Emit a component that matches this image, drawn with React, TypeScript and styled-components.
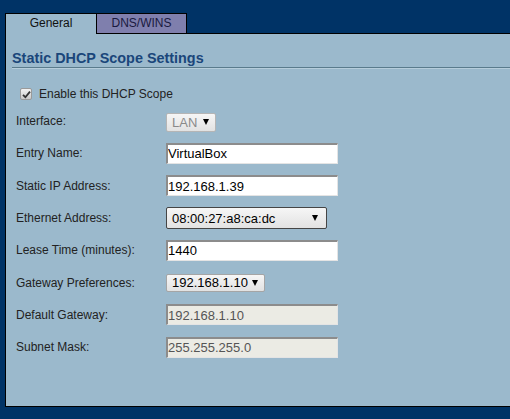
import React from "react";
import styled, { createGlobalStyle } from "styled-components";

const GlobalStyle = createGlobalStyle`
  html, body {
    margin: 0;
    padding: 0;
    background: #003366;
    overflow: hidden;
  }
  body {
    font-family: "Liberation Sans", Arial, sans-serif;
  }
`;

const Page = styled.div`
  width: 510px;
  height: 419px;
  padding: 13px 0 0 5px;
  box-sizing: border-box;
  display: flex;
  flex-direction: column;
`;

const TabBar = styled.div`
  display: flex;
  align-items: flex-end;
  height: 20px;
  position: relative;
  z-index: 1;
`;

const Tab = styled.div<{ $active?: boolean }>`
  box-sizing: border-box;
  height: 21px;
  width: ${(p) => (p.$active ? "92px" : "91px")};
  margin-left: ${(p) => (p.$active ? "0" : "-1px")};
  margin-bottom: -1px;
  border: 1px solid #000;
  border-bottom: ${(p) => (p.$active ? "none" : "1px solid #000")};
  background: ${(p) => (p.$active ? "#9bb9cc" : "#7f7fad")};
  color: ${(p) => (p.$active ? "#111" : "#1a1a40")};
  font-size: 12px;
  line-height: 16px;
  text-align: center;
  padding-top: 1px;
`;

const Panel = styled.div`
  box-sizing: border-box;
  height: 374px;
  width: 520px;
  border: 1px solid #000;
  background: #9bb9cc;
  padding: 16px 0 0 6px;
`;

const Heading = styled.h2`
  margin: 0;
  font-size: 14.4px;
  line-height: 17px;
  font-weight: bold;
  color: #1a467a;
  border-bottom: 1px solid #5a7b8c;
  box-shadow: 0 1px 0 #b6cddb;
`;

const CheckRow = styled.label`
  display: flex;
  align-items: center;
  height: 22px;
  margin: 15px 0 0 8px;
  font-size: 12px;
  color: #222;
  gap: 7px;
`;

const CheckBox = styled.span`
  box-sizing: border-box;
  width: 12px;
  height: 12px;
  border: 1px solid #9a9a9a;
  border-radius: 2px;
  background: linear-gradient(#f2f2f2, #c9c9c9);
  display: flex;
  align-items: center;
  justify-content: center;
`;

const Form = styled.div`
  display: grid;
  grid-template-columns: 150px 1fr;
  grid-auto-rows: 32.3px;
  align-items: center;
  margin-left: 4px;
`;

const Label = styled.div`
  font-size: 12px;
  color: #222;
`;

const TextInput = styled.input<{ $disabled?: boolean }>`
  box-sizing: border-box;
  width: 172px;
  height: 21px;
  margin: 0;
  padding: 0;
  border-style: solid;
  border-width: 2px 1px 1px 2px;
  border-color: #8c8c8c #e4e4e4 #e4e4e4 #8c8c8c;
  background: ${(p) => (p.$disabled ? "#ebebe4" : "#fff")};
  color: ${(p) => (p.$disabled ? "#555" : "#000")};
  font-family: "Liberation Sans", Arial, sans-serif;
  font-size: 13px;
  outline: none;
`;

const SelectBox = styled.div<{ $w: number; $h: number; $focused?: boolean; $disabled?: boolean }>`
  box-sizing: border-box;
  width: ${(p) => p.$w}px;
  height: ${(p) => p.$h}px;
  border: 1px solid ${(p) => (p.$focused ? "#454545" : p.$disabled ? "#b5b5b5" : "#a5a5a5")};
  border-radius: 2px;
  background: linear-gradient(#f6f6f6, #e2e2e2);
  display: flex;
  align-items: center;
  justify-content: space-between;
  padding: 0 ${(p) => (p.$focused ? 8 : 6)}px 0 5px;
  font-size: 13px;
  color: ${(p) => (p.$disabled ? "#8a8a8a" : "#000")};
  margin-top: ${(p) => (p.$disabled ? "2px" : "0")};
`;

const Arrow = styled.span`
  width: 0;
  height: 0;
  border-left: 3px solid transparent;
  border-right: 3px solid transparent;
  border-top: 6px solid #000;
`;

type Row =
  | { label: string; kind: "input"; value: string; disabled?: boolean }
  | { label: string; kind: "select"; value: string; w: number; h: number; focused?: boolean; disabled?: boolean };

const rows: Row[] = [
  { label: "Interface:", kind: "select", value: "LAN", w: 50, h: 19, disabled: true },
  { label: "Entry Name:", kind: "input", value: "VirtualBox" },
  { label: "Static IP Address:", kind: "input", value: "192.168.1.39" },
  { label: "Ethernet Address:", kind: "select", value: "08:00:27:a8:ca:dc", w: 161, h: 22, focused: true },
  { label: "Lease Time (minutes):", kind: "input", value: "1440" },
  { label: "Gateway Preferences:", kind: "select", value: "192.168.1.10", w: 99, h: 18 },
  { label: "Default Gateway:", kind: "input", value: "192.168.1.10", disabled: true },
  { label: "Subnet Mask:", kind: "input", value: "255.255.255.0", disabled: true },
];

export default function App() {
  return (
    <>
      <GlobalStyle />
      <Page>
        <TabBar>
          <Tab $active>General</Tab>
          <Tab>DNS/WINS</Tab>
        </TabBar>
        <Panel>
          <Heading>Static DHCP Scope Settings</Heading>
          <CheckRow>
            <CheckBox>
              <svg width="9" height="9" viewBox="0 0 9 9">
                <path d="M1 4.8 L3.4 7.2 L8 1.6" fill="none" stroke="#333" strokeWidth="1.8" />
              </svg>
            </CheckBox>
            Enable this DHCP Scope
          </CheckRow>
          <Form>
            {rows.map((r) => (
              <React.Fragment key={r.label}>
                <Label>{r.label}</Label>
                {r.kind === "input" ? (
                  <TextInput
                    $disabled={r.disabled}
                    disabled={r.disabled}
                    defaultValue={r.value}
                    readOnly
                  />
                ) : (
                  <SelectBox $w={r.w} $h={r.h} $focused={r.focused} $disabled={r.disabled}>
                    <span>{r.value}</span>
                    <Arrow />
                  </SelectBox>
                )}
              </React.Fragment>
            ))}
          </Form>
        </Panel>
      </Page>
    </>
  );
}
